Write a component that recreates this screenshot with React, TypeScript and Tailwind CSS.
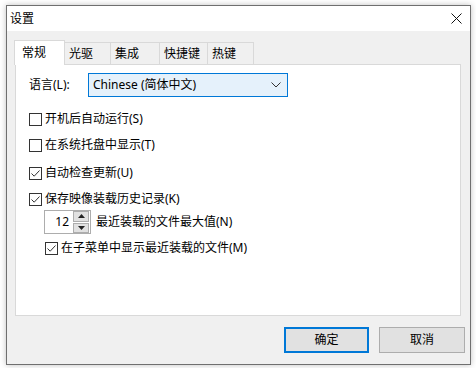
import React from "react";

const font = { fontFamily: '"Noto Sans", "Noto Sans CJK SC", sans-serif' };

function CheckBox({ checked }: { checked?: boolean }) {
  return (
    <span className="flex h-[13px] w-[13px] shrink-0 items-center justify-center border border-[#333333] bg-white">
      {checked && (
        <svg width="11" height="11" viewBox="0 0 11 11">
          <path d="M1.5 5.5 L4.2 8.2 L9.5 2.5" fill="none" stroke="#333333" strokeWidth="1" />
        </svg>
      )}
    </span>
  );
}

function CheckRow({ label, checked, className = "" }: { label: string; checked?: boolean; className?: string }) {
  return (
    <div className={`flex h-[20px] items-center gap-[3px] ${className}`}>
      <CheckBox checked={checked} />
      <span>{label}</span>
    </div>
  );
}

const tabs = ["光驱", "集成", "快捷键", "热键"];
const tabWidths = ["w-[46px]", "w-[49px]", "w-[48px]", "w-[46px]"];

export default function App() {
  return (
    <div className="h-[368px] w-[476px] bg-white pl-[6px] pt-[5px] text-[12px] text-black" style={font}>
      <div className="flex h-[360px] w-[465px] flex-col border border-[#6f6f6f] bg-[#f0f0f0] shadow-[0_0_6px_rgba(0,0,0,0.25)]">
        {/* title bar */}
        <div className="flex h-[25px] shrink-0 items-center justify-between bg-white pl-[3px] pr-[8px]">
          <span className="leading-none">设置</span>
          <svg width="11" height="11" viewBox="0 0 11 11">
            <path d="M0.5 0.5 L10.5 10.5 M10.5 0.5 L0.5 10.5" stroke="#111" strokeWidth="1" />
          </svg>
        </div>

        {/* tabs */}
        <div className="ml-[7px] mt-[9px] flex items-end">
          <div className="relative z-10 -mb-px flex h-[25px] w-[51px] items-start border border-b-0 border-[#d9d9d9] bg-white pl-[7px] pt-[3px]">
            常规
          </div>
          {tabs.map((t, i) => (
            <div
              key={t}
              className={`flex h-[22px] ${tabWidths[i]} items-center border border-l-0 border-b-0 border-[#d9d9d9] bg-[#f0f0f0] pl-[4px]`}
            >
              {t}
            </div>
          ))}
        </div>

        {/* panel */}
        <div className="ml-[8px] flex h-[252px] w-[446px] flex-col border border-[#d9d9d9] bg-white pl-[13px] pt-[8px]">
          <div className="flex h-[24px] items-center">
            <span className="w-[59px]">语言(L):</span>
            <div className="flex h-[24px] w-[200px] items-center justify-between border border-[#0078d7] bg-[#e5f1fb] pl-[4px] pr-[6px]">
              <span>Chinese (简体中文)</span>
              <svg width="10" height="6" viewBox="0 0 10 6">
                <path d="M0.5 0.5 L5 5 L9.5 0.5" fill="none" stroke="#333" strokeWidth="1" />
              </svg>
            </div>
          </div>

          <CheckRow className="mt-[12px]" label="开机后自动运行(S)" />
          <CheckRow className="mt-[6px]" label="在系统托盘中显示(T)" />
          <CheckRow className="mt-[8px]" label="自动检查更新(U)" checked />
          <CheckRow className="mt-[6px]" label="保存映像装载历史记录(K)" checked />

          <div className="ml-[15px] mt-[1px] flex items-center gap-[5px]">
            <div className="flex h-[24px] w-[47px] items-center border border-[#adadad] bg-white pr-[1px]">
              <span className="flex-1 pr-[4px] text-right">12</span>
              <div className="flex h-[22px] w-[16px] flex-col gap-px">
                <div className="flex flex-1 items-center justify-center border border-[#adadad] bg-[#e1e1e1]">
                  <svg width="7" height="4" viewBox="0 0 7 4">
                    <path d="M0 4 L3.5 0 L7 4 Z" fill="#222" />
                  </svg>
                </div>
                <div className="flex flex-1 items-center justify-center border border-[#adadad] bg-[#e1e1e1]">
                  <svg width="7" height="4" viewBox="0 0 7 4">
                    <path d="M0 0 L3.5 4 L7 0 Z" fill="#222" />
                  </svg>
                </div>
              </div>
            </div>
            <span>最近装载的文件最大值(N)</span>
          </div>

          <CheckRow className="ml-[16px] mt-[4px]" label="在子菜单中显示最近装载的文件(M)" checked />
        </div>

        {/* buttons */}
        <div className="mt-[11px] flex justify-end gap-[10px] pr-[5px]">
          <button className="flex h-[26px] w-[85px] items-center justify-center border-2 border-[#0078d7] bg-[#e1e1e1]">
            确定
          </button>
          <button className="flex h-[26px] w-[86px] items-center justify-center border border-[#adadad] bg-[#e1e1e1]">
            取消
          </button>
        </div>
      </div>
    </div>
  );
}
